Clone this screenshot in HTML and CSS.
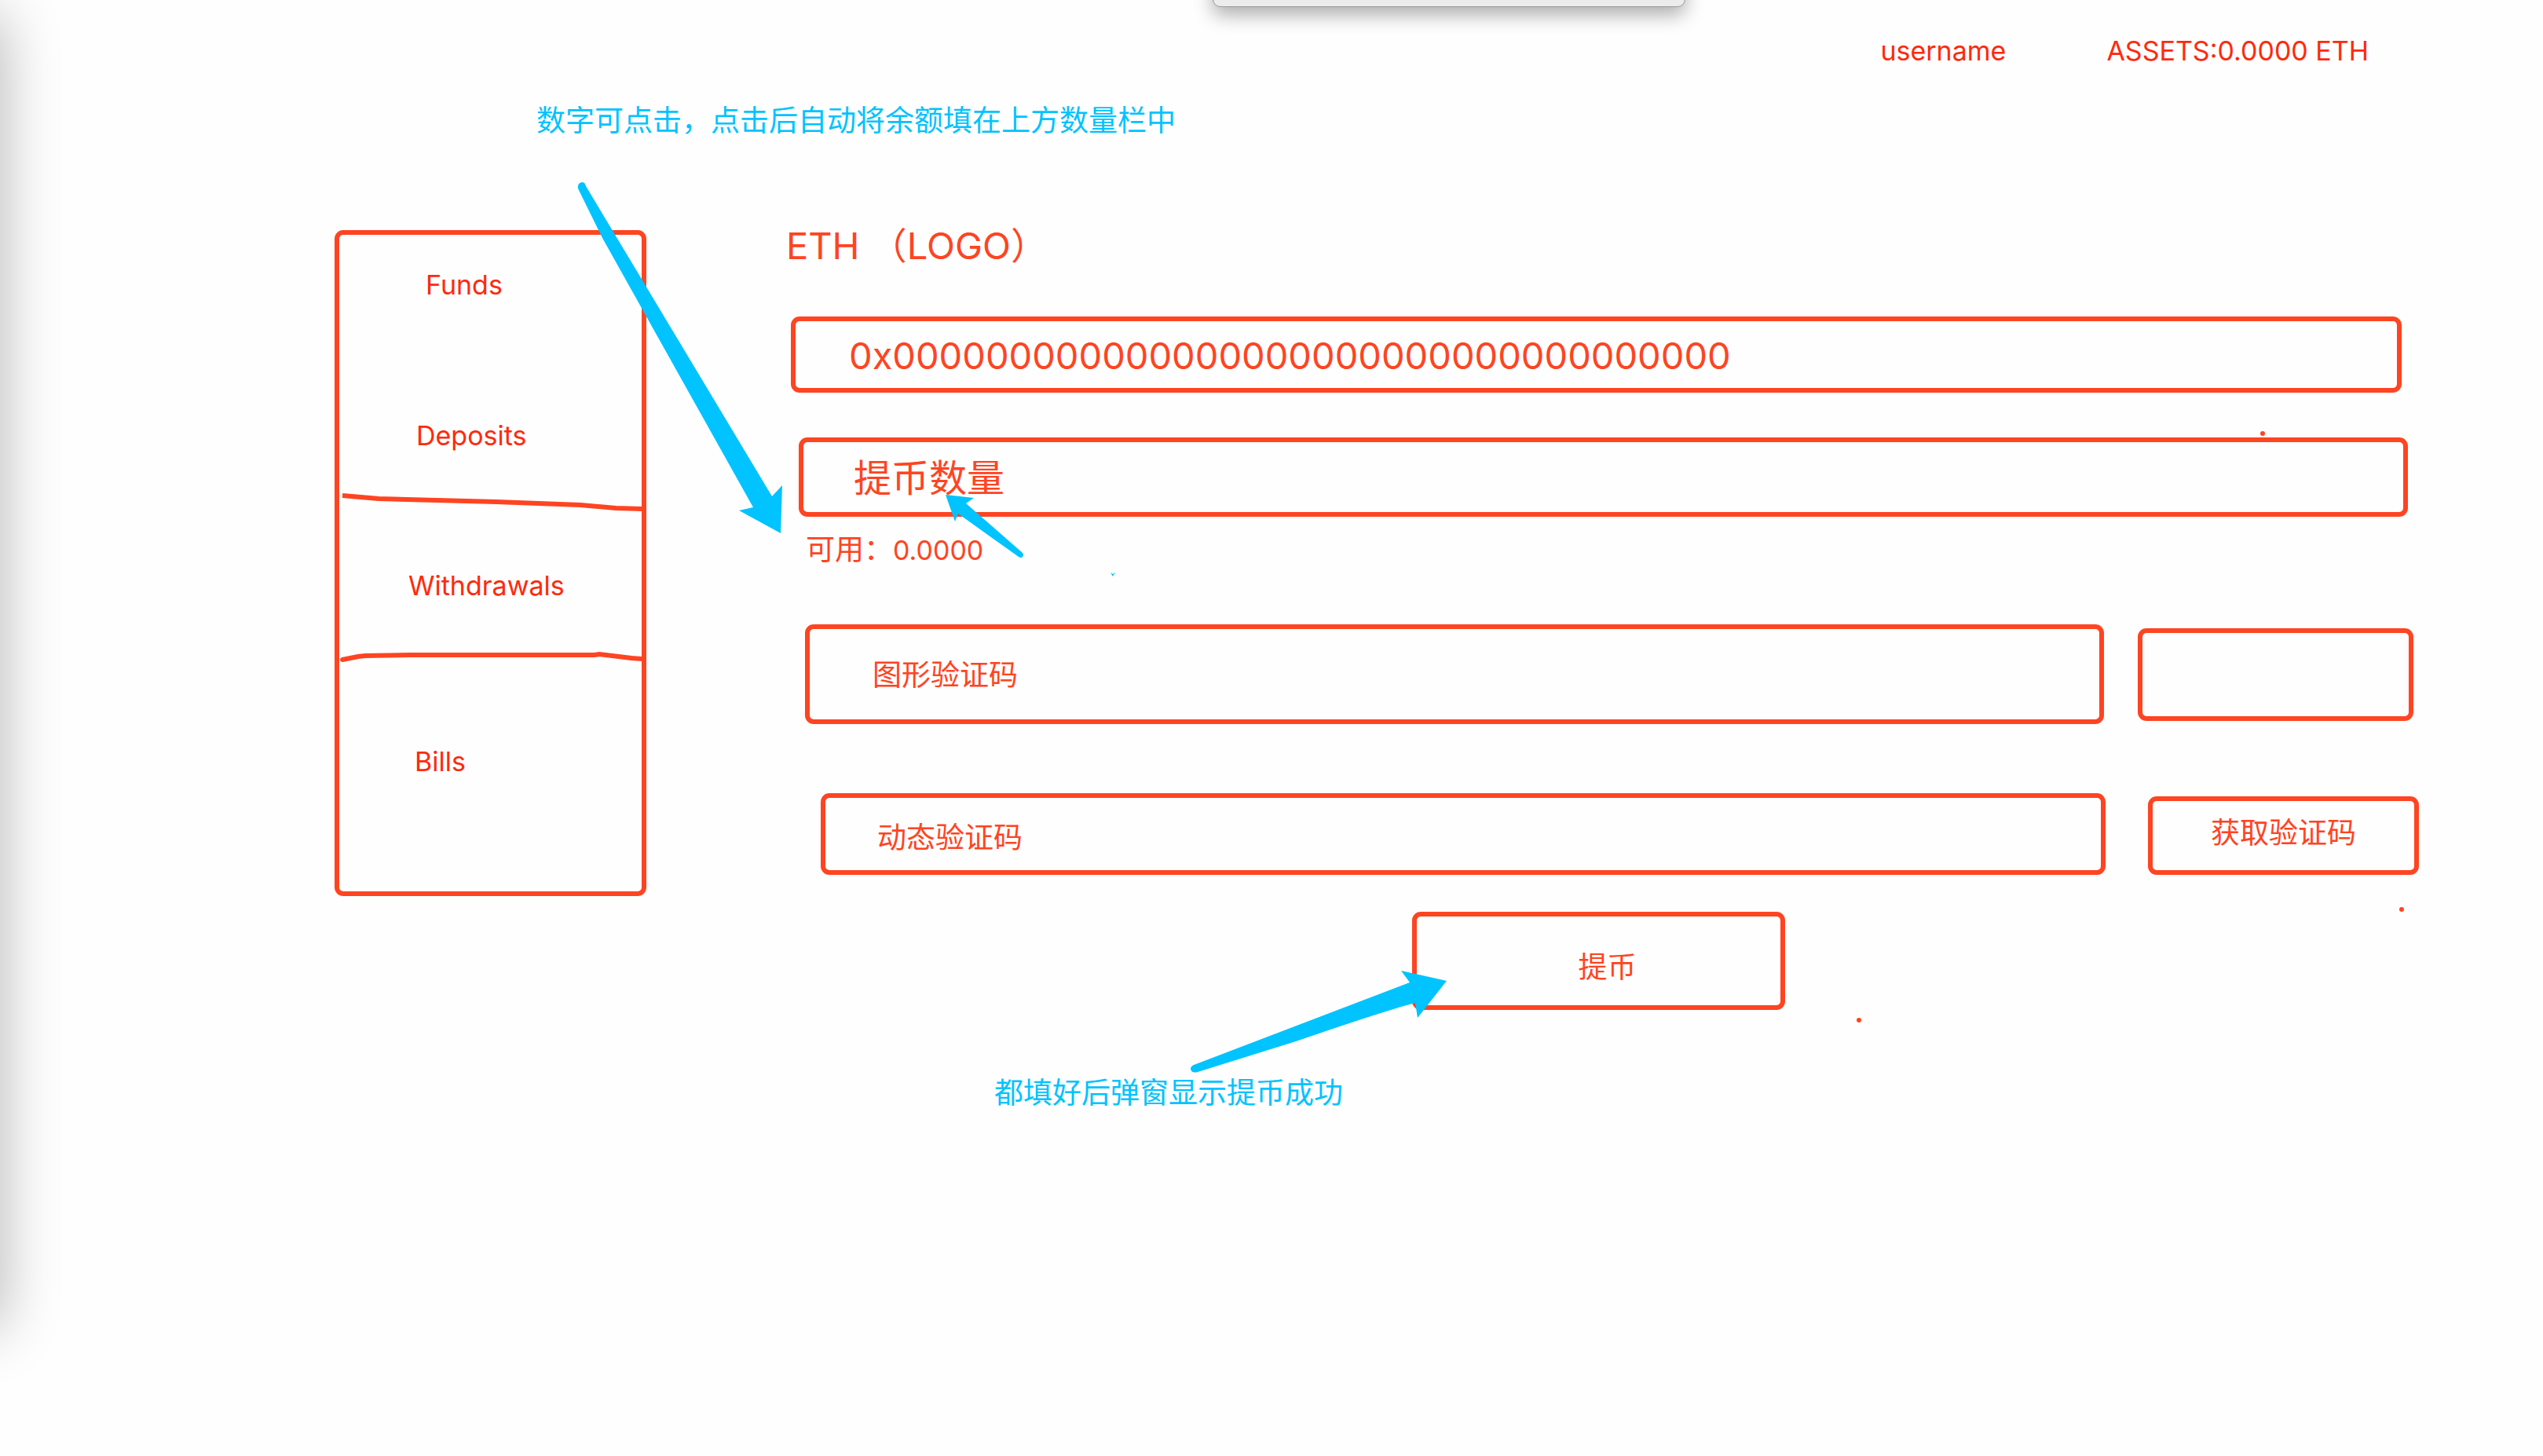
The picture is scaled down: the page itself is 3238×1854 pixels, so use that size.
FILE: index.html
```html
<!DOCTYPE html>
<html lang="zh-CN">
<head>
<meta charset="utf-8">
<meta name="viewport" content="width=device-width, initial-scale=1">
<title>ETH Withdrawals</title>
<link rel="stylesheet" href="styles.css">
</head>
<body>
<div class="board">
  <div class="window-edge" aria-hidden="true"></div>
  <div class="window-tab" aria-hidden="true"></div>

  <header class="topbar">
    <span>username</span>
    <span>ASSETS:0.0000 ETH</span>
  </header>

  <p class="note note-balance">数字可点击，点击后自动将余额填在上方数量栏中</p>

  <div class="layout">
    <nav class="menu">
      <a class="menu-funds" href="#funds">Funds</a>
      <a class="menu-deposits" href="#deposits">Deposits</a>
      <svg class="rule rule-upper" viewBox="0 0 385 30" preserveAspectRatio="none" aria-hidden="true"><path d="M4 6L50 10L200 14L307 18L352 22L386 23"/></svg>
      <a class="menu-withdrawals" href="#withdrawals">Withdrawals</a>
      <svg class="rule rule-lower" viewBox="0 0 385 20" preserveAspectRatio="none" aria-hidden="true"><path stroke-linecap="round" d="M4 13L24 9L33 8L90 7L325 7L331 6L372 11L386 12"/></svg>
      <a class="menu-bills" href="#bills">Bills</a>
    </nav>

    <main>
      <form class="form">
        <h1>ETH （LOGO）</h1>
        <div class="row row-address">
          <input class="box large" type="text" aria-label="Address" value="0x000000000000000000000000000000000000">
        </div>
        <div class="row row-amount">
          <input class="box large" type="text" aria-label="提币数量" placeholder="提币数量">
        </div>
        <p class="available">可用：<span class="amount">0.0000</span></p>
        <div class="row row-captcha">
          <input class="box" type="text" aria-label="图形验证码" placeholder="图形验证码">
          <div class="box captcha"></div>
        </div>
        <div class="row row-code">
          <input class="box" type="text" aria-label="动态验证码" placeholder="动态验证码">
          <button class="box get-code" type="button">获取验证码</button>
        </div>
        <button class="box submit" type="submit">提币</button>
      </form>
      <p class="note note-success">都填好后弹窗显示提币成功</p>
    </main>
  </div>

  <svg class="marks" aria-hidden="true">
    <g class="arrows">
      <path d="M736 240Q735 233 741 232Q745 232 746 237L983 632L996 618L994 679L941 650L959 646L767 303Z"/>
      <path d="M1204 630L1240 634L1230 641L1302 704Q1304 707 1302 709Q1300 711 1297 709L1220 654L1216 664Z"/>
      <path d="M1842 1249L1784 1236L1795 1251L1520 1356Q1516 1358 1516 1361Q1517 1367 1525 1365L1650 1326Q1760 1288 1802 1277L1805 1296Z"/>
      <path d="M1414 729L1417 731L1420 729L1417 734Z"/>
    </g>
    <g class="dots">
      <circle cx="2881" cy="552" r="3"/>
      <circle cx="3058" cy="1158" r="3"/>
      <circle cx="2367" cy="1299" r="3"/>
    </g>
  </svg>
</div>
</body>
</html>
```
FILE: styles.css
```css
:root {
  --red: #ff4422;
  --red-deep: #ff2a0c;
  --blue: #00c3ff;
}

* {
  box-sizing: border-box;
}

body {
  margin: 0;
  background: #fefefe;
  color: var(--red);
  font-family: Inter, "Noto Sans CJK SC", sans-serif;
  font-size: 34px;
  line-height: 48px;
}

p,
h1 {
  margin: 0;
  font-weight: 400;
}

.board {
  position: relative;
  min-height: 100vh;
  overflow: hidden;
}

.window-edge {
  position: absolute;
  top: 30px;
  left: -60px;
  width: 50px;
  height: 1650px;
  box-shadow: 0 0 76px 10px rgba(0, 0, 0, 0.31);
}

.window-tab {
  position: absolute;
  top: -32px;
  left: 1544px;
  width: 602px;
  height: 41px;
  border: 1px solid #999;
  border-radius: 10px;
  background: #ececec;
  box-shadow: 0 10px 24px rgba(0, 0, 0, 0.32);
}

.topbar {
  display: flex;
  justify-content: flex-end;
  gap: 128px;
  padding: 41px 222px 0 0;
  color: var(--red-deep);
}

.note {
  color: var(--blue);
  font-size: 37px;
}

.note-balance {
  padding: 41px 0 0 683px;
}

.layout {
  display: grid;
  grid-template-columns: 397px 1fr;
  gap: 178px;
  align-items: start;
  padding: 115px 158px 0 426px;
}

.menu {
  display: flex;
  flex-direction: column;
  padding-top: 40px;
  height: 848px;
  border: 6px solid var(--red);
  border-radius: 11px;
}

.menu a {
  color: var(--red-deep);
  text-decoration: none;
}

.menu-funds {
  padding-left: 110px;
}

.menu-deposits {
  padding: 144px 0 0 98px;
}

.menu-withdrawals {
  padding: 67px 0 0 88px;
}

.menu-bills {
  padding: 99px 0 0 96px;
}

.rule {
  display: block;
  flex: none;
  width: 100%;
  fill: none;
  stroke: var(--red);
  stroke-width: 6px;
}

.rule-upper {
  height: 30px;
  margin-top: 46px;
}

.rule-lower {
  height: 20px;
  margin-top: 57px;
}

.form {
  display: flex;
  flex-direction: column;
}

h1 {
  font-size: 47px;
  line-height: 48px;
  padding-bottom: 66px;
  margin-top: -4px;
}

.row {
  display: flex;
}

.box {
  flex: 1;
  min-width: 0;
  border: 6px solid var(--red);
  border-radius: 11px;
  background: transparent;
  color: var(--red);
  font: inherit;
  font-size: 37px;
}

.box::placeholder {
  color: var(--red);
  opacity: 1;
}

.row-address {
  height: 97px;
  padding: 0 22px 0 6px;
}

.row-address .box {
  padding: 2px 68px 0;
  font-size: 47px;
}

.row-amount {
  height: 101px;
  margin-top: 57px;
  padding: 0 14px 0 16px;
}

.row-amount .box {
  padding: 2px 64px 0;
  font-size: 48px;
}

.available {
  padding: 18px 0 0 25px;
  font-size: 37px;
}

.amount {
  font-size: 34px;
}

.row-captcha {
  gap: 43px;
  align-items: center;
  height: 127px;
  margin-top: 70px;
  padding: 0 7px 0 24px;
}

.row-captcha input {
  height: 127px;
  padding: 2px 80px 0;
}

.box.captcha {
  flex: 0 0 351px;
  height: 118px;
}

.row-code {
  gap: 54px;
  align-items: flex-end;
  height: 105px;
  margin-top: 87px;
  padding-left: 44px;
}

.row-code input {
  height: 104px;
  padding: 8px 66px 0;
}

.box.get-code {
  flex: 0 0 345px;
  height: 100px;
  padding: 0 0 6px;
}

.box.submit {
  flex: none;
  width: 475px;
  height: 125px;
  margin-top: 47px;
  margin-left: 797px;
  padding: 16px 0 0 22px;
}

.note-success {
  padding: 82px 0 0 265px;
}

.marks {
  position: absolute;
  top: 0;
  left: 0;
  width: 100%;
  height: 100%;
  pointer-events: none;
}

.arrows {
  fill: var(--blue);
}

.dots {
  fill: var(--red);
}
```
